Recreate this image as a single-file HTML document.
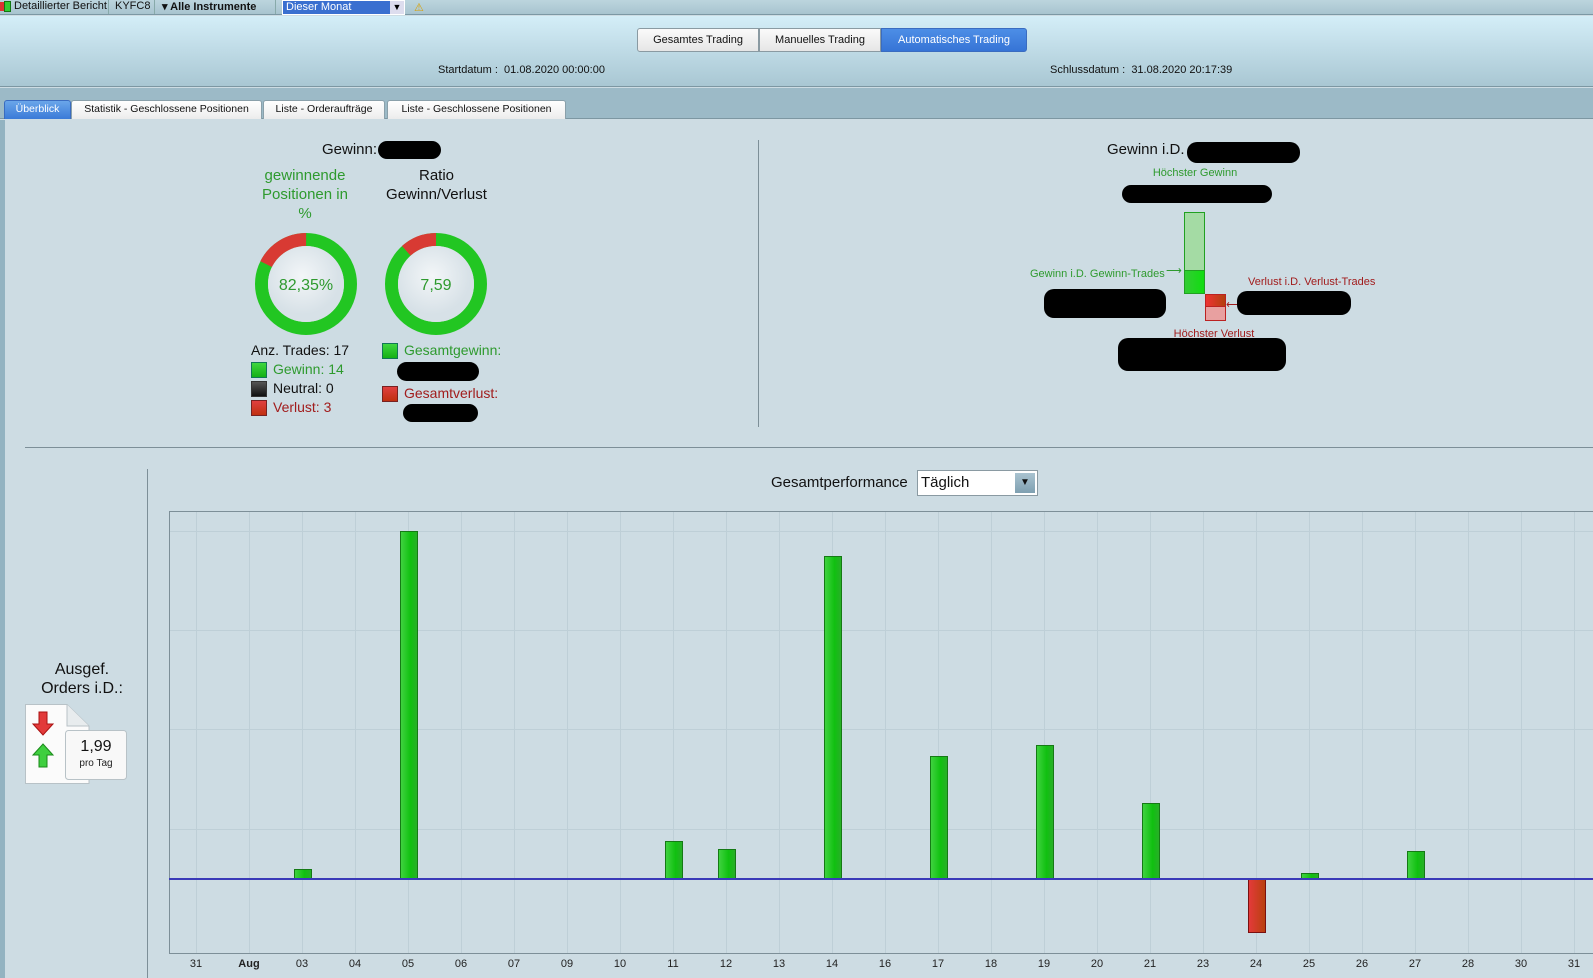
<!DOCTYPE html>
<html><head><meta charset="utf-8"><style>
*{margin:0;padding:0;box-sizing:border-box}
body{width:1593px;height:978px;position:relative;overflow:hidden;background:#cddce3;font-family:"Liberation Sans",Arial,sans-serif;color:#111}
.a{position:absolute;white-space:nowrap}
.tb{top:0;left:0;width:1593px;height:15px;background:linear-gradient(#bcd5de,#a8c4cf);border-bottom:1px solid #7c98a4;font-size:11px}
.hd{top:16px;left:0;width:1593px;height:71px;background:linear-gradient(#d4eef8,#a9c7d3);border-bottom:1px solid #7d97a2}
.ts{top:88px;left:0;width:1593px;height:31px;background:#9cbac7;border-bottom:1px solid #7d97a2}
.btn{top:28px;height:24px;font-size:11px;line-height:22px;text-align:center;background:linear-gradient(#fafafa,#e6e6e6);border:1px solid #8a9aa2}
.tab{top:100px;height:19px;font-size:10.5px;line-height:17px;text-align:center;background:linear-gradient(#fff,#ececec);border:1px solid #8aa0aa;border-bottom:none;border-radius:3px 3px 0 0}
.blk{background:#000;border-radius:10px}
.g{color:#2e9a2e}.r{color:#a11c1c}
.sq{width:16px;height:16px;border:1px solid #333;position:absolute}
.lbl{font-size:11px;color:#222;top:958px;transform:translateX(-50%)}
.bar{position:absolute;width:18px;border:1px solid #157a15;background:linear-gradient(90deg,#3fd23f,#10c010 60%,#28b028)}
</style></head><body>
<div class="a tb">
 <div class="a" style="left:0;top:2px;width:4px;height:9px;background:#d33"></div>
 <div class="a" style="left:4px;top:1px;width:7px;height:11px;background:#3c3;border:1px solid #171"></div>
 <div class="a" style="left:14px;top:0">Detaillierter Bericht</div>
 <div class="a" style="left:108px;top:0;height:14px;border-left:1px solid #8aa"></div>
 <div class="a" style="left:115px;top:0">KYFC8</div>
 <div class="a" style="left:154px;top:0;height:14px;border-left:1px solid #8aa"></div>
 <div class="a" style="left:162px;top:0;font-weight:bold">▾ Alle Instrumente</div>
 <div class="a" style="left:275px;top:0;height:14px;border-left:1px solid #8aa"></div>
 <div class="a" style="left:282px;top:0;width:123px;height:15px;background:#3a6fd0;color:#fff;border:1px solid #fff;padding-left:3px;line-height:12px">Dieser Monat<span style="position:absolute;right:0;top:0;width:14px;height:13px;background:#dde;color:#000;text-align:center;font-size:9px">▼</span></div>
 <div class="a" style="left:414px;top:1px;color:#d9a000;font-size:11px">⚠</div>
</div>
<div class="a hd"></div>
<div class="a btn" style="left:637px;width:122px;border-radius:3px 0 0 3px">Gesamtes Trading</div>
<div class="a btn" style="left:759px;width:122px">Manuelles Trading</div>
<div class="a btn" style="left:881px;width:146px;background:linear-gradient(#4d8ee6,#3674d6);color:#fff;border-color:#3a6cc0;border-radius:0 3px 3px 0">Automatisches Trading</div>
<div class="a" style="left:438px;top:64px;font-size:11px">Startdatum :&nbsp; 01.08.2020 00:00:00</div>
<div class="a" style="left:1050px;top:64px;font-size:11px">Schlussdatum :&nbsp; 31.08.2020 20:17:39</div>
<div class="a ts"></div>
<div class="a tab" style="left:4px;width:67px;background:linear-gradient(#6aa6ea,#3a7ad8);color:#fff;border-color:#3a6cc0">Überblick</div>
<div class="a tab" style="left:71px;width:191px">Statistik - Geschlossene Positionen</div>
<div class="a tab" style="left:263px;width:122px">Liste - Orderaufträge</div>
<div class="a tab" style="left:387px;width:179px">Liste - Geschlossene Positionen</div>
<div class="a" style="left:0;top:120px;width:5px;height:858px;background:#93b3c1"></div>

<!-- left summary -->
<div class="a" style="left:322px;top:141px;font-size:15px">Gewinn:</div>
<div class="a blk" style="left:378px;top:141px;width:63px;height:18px"></div>
<div class="a g" style="left:255px;top:166px;width:100px;text-align:center;font-size:15px;line-height:19px;white-space:normal">gewinnende Positionen in %</div>
<div class="a" style="left:370px;top:166px;width:133px;text-align:center;font-size:15px;line-height:19px;white-space:normal">Ratio Gewinn/Verlust</div>
<svg class="a" style="left:250px;top:228px" width="112" height="112" viewBox="0 0 112 112">
 <defs><radialGradient id="in" cx="45%" cy="40%"><stop offset="0" stop-color="#f3f6f8"/><stop offset="1" stop-color="#d7e1e7"/></radialGradient></defs>
 <circle cx="56" cy="56" r="44.5" fill="none" stroke="#22c622" stroke-width="13"/>
 <circle cx="56" cy="56" r="44.5" fill="none" stroke="#d83a33" stroke-width="13" stroke-dasharray="49.3 300" transform="rotate(-153.5 56 56)"/>
 <circle cx="56" cy="56" r="38" fill="url(#in)"/>
 <text x="56" y="62" text-anchor="middle" font-size="16" fill="#2e9a2e" font-family="Liberation Sans">82,35%</text>
</svg>
<svg class="a" style="left:380px;top:228px" width="112" height="112" viewBox="0 0 112 112">
 <circle cx="56" cy="56" r="44.5" fill="none" stroke="#22c622" stroke-width="13"/>
 <circle cx="56" cy="56" r="44.5" fill="none" stroke="#d83a33" stroke-width="13" stroke-dasharray="32.5 300" transform="rotate(-131.9 56 56)"/>
 <circle cx="56" cy="56" r="38" fill="url(#in)"/>
 <text x="56" y="62" text-anchor="middle" font-size="16" fill="#2e9a2e" font-family="Liberation Sans">7,59</text>
</svg>
<div class="a" style="left:251px;top:342px;font-size:14px">Anz. Trades: 17</div>
<div class="sq" style="left:251px;top:362px;background:linear-gradient(#3fd63f,#14b014);border-color:#175"></div>
<div class="a g" style="left:273px;top:361px;font-size:14px">Gewinn: 14</div>
<div class="sq" style="left:251px;top:381px;background:linear-gradient(#555,#111)"></div>
<div class="a" style="left:273px;top:380px;font-size:14px">Neutral: 0</div>
<div class="sq" style="left:251px;top:400px;background:linear-gradient(#e04040,#c03010);border-color:#722"></div>
<div class="a r" style="left:273px;top:399px;font-size:14px">Verlust: 3</div>
<div class="sq" style="left:382px;top:343px;background:linear-gradient(#3fd63f,#14b014);border-color:#175"></div>
<div class="a g" style="left:404px;top:342px;font-size:14px">Gesamtgewinn:</div>
<div class="a blk" style="left:397px;top:362px;width:82px;height:19px"></div>
<div class="sq" style="left:382px;top:386px;background:linear-gradient(#e04040,#c03010);border-color:#722"></div>
<div class="a r" style="left:404px;top:385px;font-size:14px">Gesamtverlust:</div>
<div class="a blk" style="left:403px;top:404px;width:75px;height:18px"></div>
<div class="a" style="left:758px;top:140px;width:1px;height:287px;background:#7d8f98"></div>

<!-- right summary -->
<div class="a" style="left:1107px;top:141px;font-size:15px">Gewinn i.D.</div>
<div class="a blk" style="left:1187px;top:142px;width:113px;height:21px"></div>
<div class="a g" style="left:1195px;top:167px;font-size:11px;transform:translateX(-50%)">Höchster Gewinn</div>
<div class="a blk" style="left:1122px;top:185px;width:150px;height:18px"></div>
<div class="a" style="left:1184px;top:212px;width:21px;height:82px;border:1px solid #21a021;background:#a4dba4"></div>
<div class="a" style="left:1184px;top:270px;width:21px;height:24px;border:1px solid #21a021;background:linear-gradient(90deg,#3c3,#1d1)"></div>
<div class="a g" style="left:1030px;top:268px;font-size:11px">Gewinn i.D. Gewinn-Trades</div>
<div class="a g" style="left:1166px;top:264px;font-size:11px">⟶</div>
<div class="a blk" style="left:1044px;top:289px;width:122px;height:29px"></div>
<div class="a" style="left:1205px;top:294px;width:21px;height:27px;border:1px solid #b22;background:#e8a0a0"></div>
<div class="a" style="left:1205px;top:294px;width:21px;height:13px;border:1px solid #b22;background:linear-gradient(90deg,#e33,#b3400f)"></div>
<div class="a r" style="left:1248px;top:276px;font-size:11px">Verlust i.D. Verlust-Trades</div>
<div class="a r" style="left:1226px;top:298px;font-size:11px">⟵</div>
<div class="a blk" style="left:1237px;top:291px;width:114px;height:24px"></div>
<div class="a r" style="left:1214px;top:328px;font-size:11px;transform:translateX(-50%)">Höchster Verlust</div>
<div class="a blk" style="left:1118px;top:338px;width:168px;height:33px"></div>
<div class="a" style="left:25px;top:447px;width:1568px;height:1px;background:#7d8f98"></div>

<!-- left panel -->
<div class="a" style="left:147px;top:469px;width:1px;height:509px;background:#7d8f98"></div>
<div class="a" style="left:37px;top:660px;width:90px;text-align:center;font-size:16px;line-height:19px;white-space:normal">Ausgef. Orders i.D.:</div>
<svg class="a" style="left:25px;top:704px" width="104" height="80" viewBox="0 0 104 80">
 <path d="M0.5 0.5H42L64 22V79.5H0.5Z" fill="#fbfbfb" stroke="#b8c2c7"/>
 <path d="M42 0.5V22H64" fill="#e8ecee" stroke="#b8c2c7"/>
 <path d="M14 8H22V20H28L18 31L8 20H14Z" fill="#e23a3a" stroke="#a11"/>
 <path d="M18 40L28 51H22V63H14V51H8Z" fill="#3fcf3f" stroke="#1a8a1a"/>
 <rect x="40.5" y="26.5" width="61" height="49" rx="3" fill="#f8f8f8" stroke="#b8c2c7"/>
 <text x="71" y="47" text-anchor="middle" font-size="16" font-family="Liberation Sans" fill="#111">1,99</text>
 <text x="71" y="62" text-anchor="middle" font-size="10" font-family="Liberation Sans" fill="#222">pro Tag</text>
</svg>

<!-- chart -->
<div class="a" style="left:771px;top:474px;font-size:15px">Gesamtperformance</div>
<div class="a" style="left:917px;top:470px;width:121px;height:26px;background:#fff;border:1px solid #8a9aa2;font-size:15px;padding:3px 0 0 3px">Täglich<span style="position:absolute;right:2px;top:2px;width:20px;height:20px;background:linear-gradient(#a9c3d0,#7fa0b1);font-size:10px;text-align:center;line-height:20px">▼</span></div>
<svg class="a" style="left:0;top:0" width="1593" height="978">
 <g stroke="#becfd7" stroke-width="1">
  <line x1="169" y1="531.5" x2="1593" y2="531.5"/><line x1="169" y1="630.5" x2="1593" y2="630.5"/>
  <line x1="169" y1="729.5" x2="1593" y2="729.5"/><line x1="169" y1="829.5" x2="1593" y2="829.5"/>
 </g>
 <g stroke="#becfd7">
  <line x1="196.5" y1="512" x2="196.5" y2="953"/><line x1="249.5" y1="512" x2="249.5" y2="953"/><line x1="302.5" y1="512" x2="302.5" y2="953"/><line x1="355.5" y1="512" x2="355.5" y2="953"/><line x1="408.5" y1="512" x2="408.5" y2="953"/><line x1="461.5" y1="512" x2="461.5" y2="953"/><line x1="514.5" y1="512" x2="514.5" y2="953"/><line x1="567.5" y1="512" x2="567.5" y2="953"/><line x1="620.5" y1="512" x2="620.5" y2="953"/><line x1="673.5" y1="512" x2="673.5" y2="953"/><line x1="726.5" y1="512" x2="726.5" y2="953"/><line x1="779.5" y1="512" x2="779.5" y2="953"/><line x1="832.5" y1="512" x2="832.5" y2="953"/><line x1="885.5" y1="512" x2="885.5" y2="953"/><line x1="938.5" y1="512" x2="938.5" y2="953"/><line x1="991.5" y1="512" x2="991.5" y2="953"/><line x1="1044.5" y1="512" x2="1044.5" y2="953"/><line x1="1097.5" y1="512" x2="1097.5" y2="953"/><line x1="1150.5" y1="512" x2="1150.5" y2="953"/><line x1="1203.5" y1="512" x2="1203.5" y2="953"/><line x1="1256.5" y1="512" x2="1256.5" y2="953"/><line x1="1309.5" y1="512" x2="1309.5" y2="953"/><line x1="1362.5" y1="512" x2="1362.5" y2="953"/><line x1="1415.5" y1="512" x2="1415.5" y2="953"/><line x1="1468.5" y1="512" x2="1468.5" y2="953"/><line x1="1521.5" y1="512" x2="1521.5" y2="953"/><line x1="1574.5" y1="512" x2="1574.5" y2="953"/>
 </g>
 <path d="M169.5 953V511.5H1593" fill="none" stroke="#7d8f98"/>
 <line x1="169" y1="953.5" x2="1593" y2="953.5" stroke="#7d8f98"/>
</svg>
<div class="bar" style="left:294px;top:869px;height:11px"></div>
<div class="bar" style="left:400px;top:531px;height:349px"></div>
<div class="bar" style="left:665px;top:841px;height:39px"></div>
<div class="bar" style="left:718px;top:849px;height:31px"></div>
<div class="bar" style="left:824px;top:556px;height:324px"></div>
<div class="bar" style="left:930px;top:756px;height:124px"></div>
<div class="bar" style="left:1036px;top:745px;height:135px"></div>
<div class="bar" style="left:1142px;top:803px;height:77px"></div>
<div class="bar" style="left:1248px;top:879px;height:54px;border-color:#7a1010;background:linear-gradient(90deg,#e33a3a,#b8400f)"></div>
<div class="bar" style="left:1301px;top:873px;height:7px"></div>
<div class="bar" style="left:1407px;top:851px;height:29px"></div>
<div class="a" style="left:169px;top:878px;width:1424px;height:2px;background:#3a3ab8"></div>
<div class="a lbl" style="left:196px">31</div><div class="a lbl" style="left:249px;font-weight:bold">Aug</div><div class="a lbl" style="left:302px">03</div><div class="a lbl" style="left:355px">04</div><div class="a lbl" style="left:408px">05</div><div class="a lbl" style="left:461px">06</div><div class="a lbl" style="left:514px">07</div><div class="a lbl" style="left:567px">09</div><div class="a lbl" style="left:620px">10</div><div class="a lbl" style="left:673px">11</div><div class="a lbl" style="left:726px">12</div><div class="a lbl" style="left:779px">13</div><div class="a lbl" style="left:832px">14</div><div class="a lbl" style="left:885px">16</div><div class="a lbl" style="left:938px">17</div><div class="a lbl" style="left:991px">18</div><div class="a lbl" style="left:1044px">19</div><div class="a lbl" style="left:1097px">20</div><div class="a lbl" style="left:1150px">21</div><div class="a lbl" style="left:1203px">23</div><div class="a lbl" style="left:1256px">24</div><div class="a lbl" style="left:1309px">25</div><div class="a lbl" style="left:1362px">26</div><div class="a lbl" style="left:1415px">27</div><div class="a lbl" style="left:1468px">28</div><div class="a lbl" style="left:1521px">30</div><div class="a lbl" style="left:1574px">31</div>
</body></html>
